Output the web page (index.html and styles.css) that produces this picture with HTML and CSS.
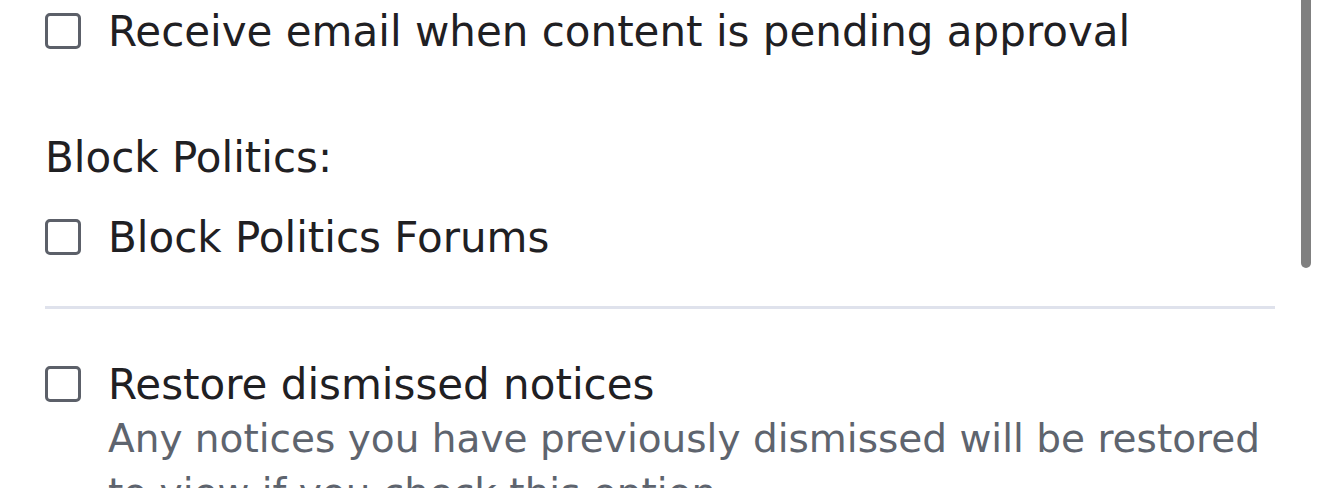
FILE: index.html
```html
<!DOCTYPE html>
<html lang="en">
<head>
  <meta charset="UTF-8">
  <title>Preferences</title>
  <link rel="stylesheet" href="styles.css">
</head>
<body>

  <div class="prefs">
    <label class="option">
      <input type="checkbox" class="box">
      <span class="option-text">Receive email when content is pending approval</span>
    </label>

    <div class="group-title">Block Politics:</div>
    <label class="option">
      <input type="checkbox" class="box">
      <span class="option-text">Block Politics Forums</span>
    </label>

    <hr class="divider">

    <label class="option">
      <input type="checkbox" class="box">
      <span class="option-text">
        Restore dismissed notices
        <span class="hint">Any notices you have previously dismissed will be restored to view if you check this option.</span>
      </span>
    </label>
  </div>

  <!-- overlay scrollbar thumb -->
  <div class="scroll-thumb"></div>

</body>
</html>
```

FILE: styles.css
```css
html, body {
  margin: 0;
  height: 100%;
  overflow: hidden;
  background: #fff;
}
body {
  font-family: "DejaVu Sans", Verdana, sans-serif;
  color: #1f2023;
  position: relative;
}
.prefs {
  padding: 5px 45px 0 45px;
}
.option {
  display: flex;
  align-items: flex-start;
  font-size: 42px;
  line-height: 54px;
}
.box {
  appearance: none;
  -webkit-appearance: none;
  flex: none;
  width: 36px;
  height: 36px;
  margin: 8px 27px 0 0;
  border: 3px solid #5c6069;
  border-radius: 5px;
  box-sizing: border-box;
  background: #fff;
}
.option-text {
  display: block;
}
.group-title {
  font-size: 42px;
  line-height: 54px;
  margin-top: 72px;
  margin-bottom: 26px;
}
.divider {
  border: none;
  height: 3px;
  background: #dfe2ec;
  margin: 41px 0 49px 0;
}
.hint {
  display: block;
  font-size: 39px;
  line-height: 54px;
  color: #5e646e;
}
.scroll-thumb {
  position: absolute;
  top: -10px;
  left: 1301px;
  width: 10px;
  height: 278px;
  border-radius: 5px;
  background: #808080;
}
```
